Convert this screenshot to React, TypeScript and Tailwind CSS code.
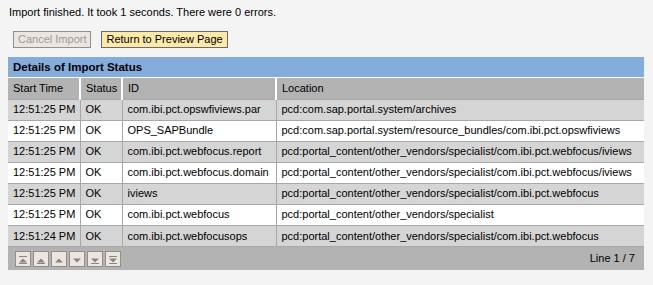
import React from "react";

interface Row {
  time: string;
  status: string;
  id: string;
  location: string;
}

const rows: Row[] = [
  { time: "12:51:25 PM", status: "OK", id: "com.ibi.pct.opswfiviews.par", location: "pcd:com.sap.portal.system/archives" },
  { time: "12:51:25 PM", status: "OK", id: "OPS_SAPBundle", location: "pcd:com.sap.portal.system/resource_bundles/com.ibi.pct.opswfiviews" },
  { time: "12:51:25 PM", status: "OK", id: "com.ibi.pct.webfocus.report", location: "pcd:portal_content/other_vendors/specialist/com.ibi.pct.webfocus/iviews" },
  { time: "12:51:25 PM", status: "OK", id: "com.ibi.pct.webfocus.domain", location: "pcd:portal_content/other_vendors/specialist/com.ibi.pct.webfocus/iviews" },
  { time: "12:51:25 PM", status: "OK", id: "iviews", location: "pcd:portal_content/other_vendors/specialist/com.ibi.pct.webfocus" },
  { time: "12:51:25 PM", status: "OK", id: "com.ibi.pct.webfocus", location: "pcd:portal_content/other_vendors/specialist" },
  { time: "12:51:24 PM", status: "OK", id: "com.ibi.pct.webfocusops", location: "pcd:portal_content/other_vendors/specialist/com.ibi.pct.webfocus" },
];

function NavIcon({ kind }: { kind: number }) {
  // 0 first, 1 page up, 2 up, 3 down, 4 page down, 5 last
  const c = "#858585";
  const up = <polygon points="5,3.5 9,7.5 1,7.5" fill={c} />;
  const down = <polygon points="1,3.5 9,3.5 5,7.5" fill={c} />;
  return (
    <svg width="10" height="10" viewBox="0 0 10 10" className="mt-[2px]">
      {kind === 0 && (
        <>
          <rect x="1" y="1" width="8" height="1" fill={c} />
          {up}
          <rect x="1" y="8" width="8" height="1" fill={c} />
        </>
      )}
      {kind === 1 && (
        <>
          {up}
          <rect x="1" y="8" width="8" height="1" fill={c} />
        </>
      )}
      {kind === 2 && up}
      {kind === 3 && down}
      {kind === 4 && (
        <>
          {down}
          <rect x="1" y="8" width="8" height="1" fill={c} />
        </>
      )}
      {kind === 5 && (
        <>
          <rect x="1" y="1" width="8" height="1" fill={c} />
          {down}
          <rect x="1" y="8" width="8" height="1" fill={c} />
        </>
      )}
    </svg>
  );
}

function App() {
  return (
    <div
      className="w-[653px] h-[285px] bg-[#f4f4f4] text-[11px] text-black overflow-hidden"
      style={{ fontFamily: '"Liberation Sans", Arial, sans-serif' }}
    >
      <div className="pl-[9px] pt-[5px] leading-[14px]">
        Import finished. It took 1 seconds. There were 0 errors.
      </div>
      <div className="flex items-center gap-[10px] pl-[13px] mt-[12px]">
        <button className="h-[17px] px-[4px] bg-[#ede6de] border border-[#8f8f8f] text-[#9a9a9a] leading-[15px]">
          Cancel Import
        </button>
        <button className="h-[17px] px-[4px] bg-[#fde9a8] border border-[#6b6b6b] text-black leading-[15px]">
          Return to Preview Page
        </button>
      </div>
      <div className="ml-[8px] mt-[9px] w-[636px]">
        <div className="h-[21px] bg-[#84acdc] border-b border-white pl-[5px] font-bold text-[11.5px] leading-[20px]">
          Details of Import Status
        </div>
        <table className="w-full table-fixed border-collapse">
          <thead>
            <tr className="bg-[#b3b3b3] h-[21px]">
              <th className="w-[72px] text-left font-normal pl-[5px] border-r-2 border-white">Start Time</th>
              <th className="w-[42px] text-left font-normal pl-[5px] border-r-2 border-white">Status</th>
              <th className="w-[154px] text-left font-normal pl-[5px] border-r-2 border-white">ID</th>
              <th className="text-left font-normal pl-[5px]">Location</th>
            </tr>
          </thead>
          <tbody>
            {rows.map((r, i) => (
              <tr
                key={i}
                className={`h-[21px] border-t border-[#a8a8a8] ${i % 2 === 0 ? "bg-[#d5d5d5]" : "bg-white"}`}
              >
                <td className="pl-[5px] border-r border-[#a8a8a8] whitespace-nowrap">{r.time}</td>
                <td className="pl-[5px] border-r border-[#a8a8a8]">{r.status}</td>
                <td className="pl-[5px] border-r border-[#a8a8a8] whitespace-nowrap">{r.id}</td>
                <td className="pl-[5px] whitespace-nowrap">{r.location}</td>
              </tr>
            ))}
          </tbody>
        </table>
        <div className="h-[24px] bg-[#b3b3b3] border-t border-[#a8a8a8] flex items-center pl-[7px] pr-[9px]">
          <div className="flex gap-[2px]">
            {[0, 1, 2, 3, 4, 5].map((k) => (
              <div
                key={k}
                className="w-[16px] h-[16px] bg-[#ede6de] border border-[#8f8f8f] flex items-center justify-center"
              >
                <NavIcon kind={k} />
              </div>
            ))}
          </div>
          <div className="ml-auto">Line 1 / 7</div>
        </div>
      </div>
    </div>
  );
}

export default App;
